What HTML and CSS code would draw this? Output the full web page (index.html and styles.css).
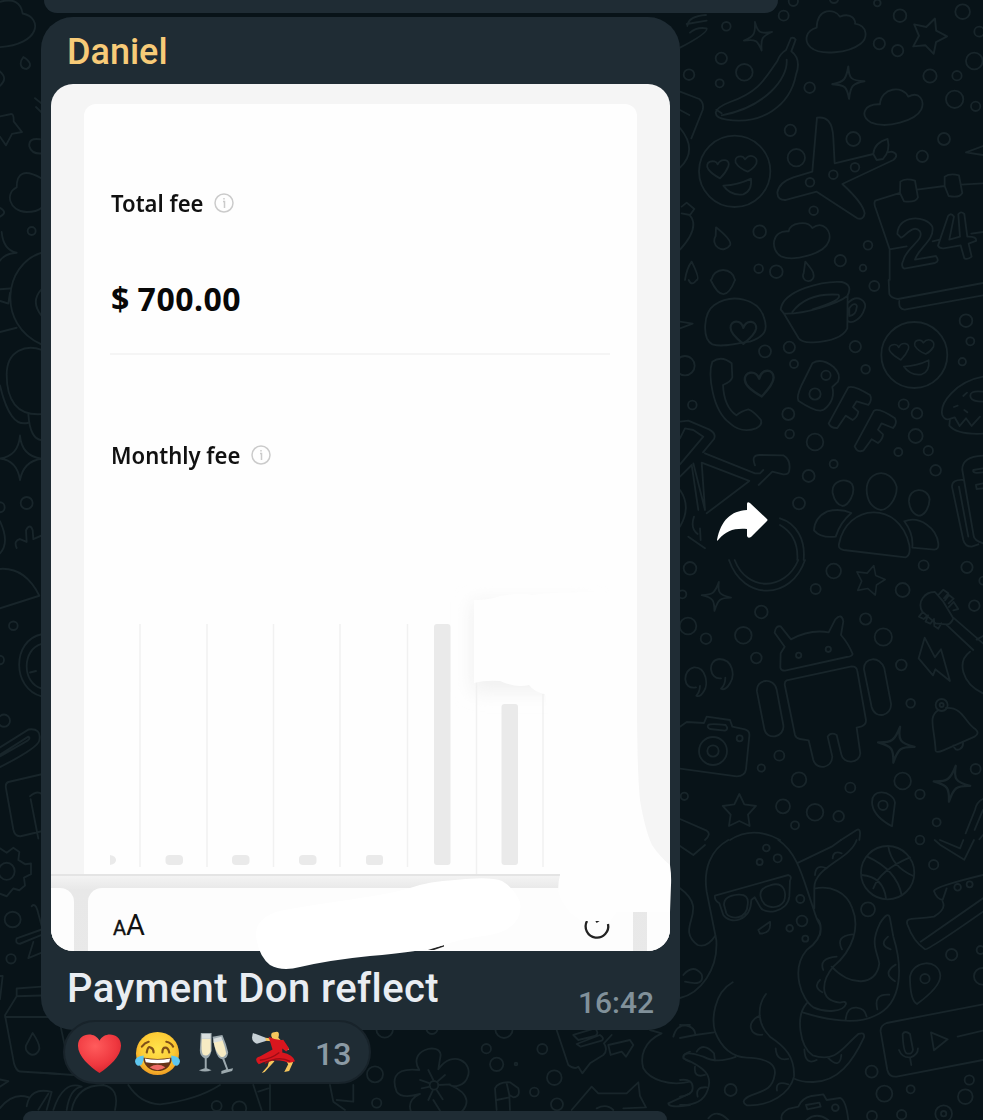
FILE: index.html
```html
<!DOCTYPE html>
<html lang="en">
<head>
<meta charset="utf-8">
<title>Chat</title>
<link rel="stylesheet" href="styles.css">
</head>
<body>
<main class="chat">
<svg class="wallpaper" viewBox="0 0 983 1120" aria-hidden="true">
<defs>
<path id="spark" d="M0-44C1-12 8-5 44-4C12 2 6 8 2 44C-4 12-8 6-44 4C-12-2-6-8 0-44Z"/>
<path id="star" d="M0-50L15-19 50-14 26 12 31 46 0 31-31 46-26 12-50-14-15-19Z"/>
<path id="heart" d="M0 28Q-32 4-32-12C-32-32-6-34 0-12C8-34 34-30 32-10Q30 4 0 28Z"/>
<path id="love" d="M-80-5C-95-28-60-38-52-20C-42-40-12-35-20-14Q-28 6-45 22Q-68 10-80-5ZM2-25C-4-45 22-50 30-35C46-55 70-42 64-22Q55-6 38 2Q12-8 2-25ZM-35 44Q10 42 48 23Q52 60 25 70Q-12 76-35 44Z"/>
</defs>
<g transform="translate(680 0) scale(.3333)">
<g><circle cx="311" cy="47" r="15"/><circle cx="139" cy="79" r="13"/><circle cx="124" cy="175" r="17"/><circle cx="27" cy="224" r="16"/><circle cx="119" cy="250" r="12"/><circle cx="193" cy="217" r="25"/><circle cx="389" cy="263" r="16"/><circle cx="340" cy="4" r="14"/><circle cx="462" cy="-4" r="13"/><circle cx="592" cy="9" r="10"/><circle cx="660" cy="47" r="19"/><circle cx="848" cy="35" r="22"/><circle cx="898" cy="95" r="15"/><circle cx="598" cy="131" r="17"/><circle cx="653" cy="152" r="17"/><circle cx="883" cy="183" r="25"/><circle cx="750" cy="228" r="20"/><circle cx="831" cy="227" r="14"/><circle cx="824" cy="298" r="26"/><circle cx="887" cy="319" r="14"/><circle cx="792" cy="417" r="18"/><circle cx="727" cy="469" r="17"/><circle cx="520" cy="417" r="21"/><circle cx="331" cy="391" r="17"/><circle cx="349" cy="473" r="26"/><circle cx="525" cy="502" r="13"/><circle cx="460" cy="524" r="13"/><circle cx="390" cy="547" r="13"/><circle cx="401" cy="632" r="13"/><circle cx="239" cy="695" r="19"/><circle cx="564" cy="736" r="13"/><circle cx="481" cy="782" r="17"/><circle cx="549" cy="804" r="10"/><circle cx="289" cy="815" r="19"/><circle cx="236" cy="806" r="13"/><circle cx="164" cy="514" r="107"/></g>
<use href="#spark" transform="translate(234 109) rotate(-12)"/><use href="#spark" transform="translate(505 248) scale(1.1)"/><use href="#star" transform="translate(747 105) rotate(20) scale(1.05)"/>
<path d="M410 83C412 22 465 25 480 50C518 35 528 65 525 71C565 78 563 115 542 131C505 160 420 167 392 142C370 122 378 92 410 83ZM600 313C602 262 670 255 685 290C718 272 735 302 724 328C707 362 620 388 572 367C538 345 553 311 600 313ZM326 694C330 668 382 660 397 684C430 660 456 695 447 722C433 764 340 785 303 769C270 750 274 690 326 694Z"/>
<path d="M318 150L333 114Q342 111 347 119L334 154Q365 178 348 224C330 320 242 375 140 359Q108 355 107 338Q111 321 150 306C235 276 253 240 292 183Q300 161 318 150ZM320 179C325 235 255 322 125 346M109 329L125 340"/>
<path d="M397 515L411 353C440 349 458 365 460 414L464 490 580 462Q582 429 623 417Q632 453 609 477L590 480 580 462M623 457L635 455Q660 463 640 480L487 552Q550 610 554 640Q551 661 532 655L410 575 318 600Q293 602 292 578Q296 547 340 532L397 515"/>
<use href="#love" transform="translate(165 513)"/>
<path d="M586 602L660 579 661 545Q675 533 705 542L714 592Q706 609 672 604L660 579M711 569L794 558 794 530Q810 519 837 526L847 579Q838 595 806 588L794 558M843 554L909 550M586 602Q580 610 588 628L629 748 629 840M629 748L680 739M758 724L779 719M874 701L909 696M652 702C655 642 738 646 757 680C766 719 714 746 705 779L768 768Q780 784 765 789L673 806Q661 800 670 781C680 740 734 721 720 694C700 670 675 710 663 713ZM822 650Q812 636 804 649L774 737Q778 746 791 745L842 736 853 775Q864 780 875 770L866 731 888 723Q892 709 862 710L853 642Q842 632 835 643L840 710 808 719Z"/>
<path d="M108 682Q158 722 150 736A24 24 0 1 1 107 708ZM376 785Q402 815 400 822A16 16 0 1 1 371 820ZM35 785Q60 835 51 840M15 840Q20 805 35 785M94 840A36 36 0 0 1 165 840M0 275L58 297Q73 309 68 330L34 415M0 384Q55 450 0 503M22 78Q25 48 78 45M20 72L80 62M30 98Q50 80 80 85Q86 98 0 143M5 620L20 608 43 627 30 645 5 640M28 645Q62 680 0 749M909 438L858 457 909 465M0 330L28 345"/>
</g>
<g transform="translate(680 280) scale(.3333)">
<circle cx="583" cy="18" r="15"/><circle cx="255" cy="214" r="18"/><circle cx="328" cy="202" r="17"/><circle cx="342" cy="252" r="12"/><circle cx="526" cy="200" r="17"/><circle cx="557" cy="268" r="13"/><circle cx="858" cy="122" r="19"/><circle cx="871" cy="184" r="12"/><circle cx="847" cy="245" r="11"/><circle cx="325" cy="402" r="18"/><circle cx="329" cy="462" r="13"/><circle cx="405" cy="486" r="25"/><circle cx="461" cy="552" r="12"/><circle cx="386" cy="588" r="18"/><circle cx="357" cy="670" r="18"/><circle cx="671" cy="373" r="15"/><circle cx="711" cy="400" r="16"/><circle cx="707" cy="468" r="21"/><circle cx="655" cy="516" r="12"/><circle cx="745" cy="512" r="14"/><circle cx="767" cy="571" r="16"/><circle cx="37" cy="375" r="13"/><circle cx="15" cy="257" r="29"/><circle cx="703" cy="225" r="99"/><circle cx="438" cy="286" r="14"/><circle cx="405" cy="342" r="17"/>
<use href="#love" transform="translate(703 220) scale(.9)"/><use href="#heart" transform="translate(190 158) scale(1.2)"/><use href="#heart" transform="translate(240 312) rotate(-8) scale(1.35)"/>
<path d="M92 0Q132 85 165 0M26 0Q35 20 50 0M97 193C65 175 70 98 103 75C155 39 235 55 252 113C265 150 255 169 210 185C165 190 130 203 97 193ZM0 125L38 131 0 145"/>
<path d="M302 88C310 30 430 2 486 6Q520 15 502 48C475 70 375 103 312 101ZM312 101L356 175Q366 189 400 187C455 184 490 170 502 145L503 46M337 96Q380 38 475 44Q490 61 398 88M503 70C533 38 565 65 553 88C545 117 515 133 504 123M508 104V85C520 65 534 72 530 83Q528 106 508 108M626 0L628 42Q632 54 654 57L909 9M658 63Q655 88 674 89L909 46"/>
<path d="M155 250Q125 225 97 245C84 280 95 390 150 430Q185 461 228 445Q248 436 243 420Q222 394 205 388Q182 394 169 406Q132 380 129 315Q153 306 157 292Z"/>
<path d="M397 250Q425 232 461 261Q484 283 474 305L457 321Q467 360 433 388Q415 402 355 362Q349 350 365 315ZM505 322Q520 314 570 345Q578 359 565 375L530 364 519 381 535 395Q533 411 518 420L497 407 472 444Q452 445 446 430ZM582 392Q597 382 645 415Q653 430 639 444L605 430 594 449 609 463Q609 478 594 489L575 478 551 511Q532 520 524 499Z"/>
<path d="M75 520L225 580 240 580 250 570M225 556Q212 524 240 525L310 526Q333 540 328 570Q328 584 310 583L277 575 236 615M0 425L25 422 87 448Q110 460 102 477L69 517M0 475L15 445 40 450 70 470 0 553M40 550L75 690M65 548L208 603 80 700M65 548L75 690M0 590L35 555 55 690M42 710Q30 745 53 762M25 770L75 805M60 745L62 780M300 715C350 730 377 780 371 840M300 735C335 755 355 790 352 840M0 630Q35 680 0 740"/>
<path d="M458 640C453 600 500 592 516 612C530 640 503 678 487 678Q466 673 458 640ZM560 630C560 570 632 560 650 620C652 655 625 690 602 690Q562 680 560 630ZM687 665C685 620 744 620 749 658C747 690 730 708 715 707Q690 698 687 665ZM402 751Q404 712 442 694Q482 684 514 699Q480 728 467 770Q422 775 402 751ZM477 792C500 670 658 660 688 795Q693 826 677 832L491 810Q474 807 477 792ZM673 724C720 706 770 745 775 790Q777 809 763 809L697 803Q701 760 673 724Z"/>
<path d="M909 290C827 305 778 370 787 405Q794 422 810 417L808 437Q832 465 909 461M810 417L824 412 839 438 858 415 875 438 900 410M909 335Q865 330 872 352Q877 365 909 365M850 348L861 338M822 381L833 377M853 390L862 397M909 527Q845 530 847 570L881 767Q882 781 909 790M850 600Q816 598 816 620L850 780Q855 800 875 800L895 793M837 620L865 770M909 565L880 570Q876 582 909 577M909 610L888 615 890 627 909 625"/>
</g>
<g transform="translate(680 560) scale(.3333)">
<circle cx="30" cy="25" r="19"/><circle cx="7" cy="103" r="12"/><circle cx="24" cy="198" r="25"/><circle cx="78" cy="236" r="16"/><circle cx="244" cy="156" r="19"/><circle cx="190" cy="226" r="25"/><circle cx="229" cy="294" r="16"/><circle cx="461" cy="33" r="22"/><circle cx="407" cy="87" r="15"/><circle cx="557" cy="177" r="17"/><circle cx="610" cy="231" r="26"/><circle cx="668" cy="90" r="21"/><circle cx="731" cy="16" r="15"/><circle cx="861" cy="22" r="17"/><circle cx="910" cy="62" r="12"/><circle cx="883" cy="137" r="16"/><circle cx="664" cy="315" r="16"/><circle cx="692" cy="430" r="13"/><circle cx="356" cy="286" r="8"/><circle cx="445" cy="268" r="8"/><circle cx="298" cy="587" r="15"/><circle cx="244" cy="624" r="11"/><circle cx="357" cy="659" r="22"/><circle cx="309" cy="739" r="21"/><circle cx="345" cy="796" r="12"/><circle cx="405" cy="757" r="25"/><circle cx="476" cy="769" r="16"/><circle cx="511" cy="683" r="15"/><circle cx="668" cy="663" r="25"/><circle cx="720" cy="703" r="14"/><circle cx="887" cy="627" r="15"/><circle cx="770" cy="787" r="12"/><circle cx="609" cy="736" r="14"/><circle cx="99" cy="573" r="42"/><circle cx="99" cy="573" r="17"/><circle cx="13" cy="709" r="11"/><circle cx="179" cy="535" r="9"/><circle cx="785" cy="435" r="18"/><circle cx="785" cy="435" r="6"/>
<use href="#spark" transform="translate(109 109) rotate(10)"/><use href="#spark" transform="translate(649 554) rotate(12) scale(1.25)"/><use href="#spark" transform="translate(816 671) rotate(12) scale(1.25)"/><use href="#star" transform="translate(570 59) rotate(15) scale(.88)"/><use href="#star" transform="translate(178 752)"/>
<path d="M147 0C190 125 335 120 375 0M164 0C200 95 315 95 355 0"/>
<path d="M301 322L302 280 314 260 284 218Q287 196 302 199L333 238Q390 207 446 217L466 178Q485 158 490 184L483 225Q505 250 518 282Q515 290 500 291L315 332Q302 332 301 322ZM320 361L515 319Q530 319 532 333L558 480Q559 493 545 499L530 503 541 580C540 610 490 615 484 583L470 525Q452 515 443 530L457 590C455 626 410 632 400 600L386 541 360 537Q348 535 345 525L315 378Q312 365 320 361ZM231 395C226 357 283 350 290 389L310 495C315 533 260 543 253 507ZM552 328C550 292 600 285 613 325L633 430C637 468 585 480 575 441Z"/>
<path d="M48 382C8 392 5 330 42 322C80 320 85 376 72 393Q60 413 49 407Q59 397 60 378M123 355C88 360 80 300 118 297C160 298 165 348 150 370Q137 393 123 386Q136 374 136 353M0 500L20 486 72 489 80 470 150 480 157 500 195 508Q210 512 208 528L198 628Q195 648 170 649L0 626M85 495Q90 490 137 495Q147 508 135 512L90 507Q80 502 85 495"/>
<path d="M734 233L765 292 783 268 810 363 766 328 759 346 716 295ZM798 193Q812 195 820 175L790 125 765 96C735 95 710 125 727 155L767 190ZM798 193L880 270M820 173L909 250M870 275C830 305 845 370 909 400M890 239L909 228M776 104L790 89 805 100 792 115M795 121L807 105 821 116 806 130M807 141L821 126 835 147 820 151M728 156L717 170 731 177 744 166M744 167L737 185 751 191 762 177M762 178L763 198 775 206 784 190M776 450C743 470 763 500 767 572Q769 580 790 571L884 530Q900 520 887 508C855 490 850 440 798 444M820 556Q825 575 840 567Q851 560 849 547M577 735C568 680 640 692 645 728L636 799Q583 770 577 735ZM150 840Q220 796 300 840M0 777L80 812Q95 822 75 840M483 840L530 810Q545 802 538 840M909 717Q890 725 885 750L857 820M909 750L884 810M898 838L909 825"/>
</g>
<g transform="translate(680 840) scale(.3333)">
<circle cx="259" cy="24" r="10"/><circle cx="239" cy="66" r="9"/><circle cx="293" cy="55" r="12"/><circle cx="361" cy="177" r="12"/><circle cx="366" cy="243" r="16"/><circle cx="329" cy="265" r="10"/><circle cx="376" cy="296" r="9"/><circle cx="623" cy="98" r="80"/><circle cx="564" cy="208" r="21"/><circle cx="761" cy="74" r="14"/><circle cx="815" cy="344" r="17"/><circle cx="902" cy="330" r="12"/><circle cx="907" cy="409" r="25"/><circle cx="735" cy="416" r="14"/><circle cx="575" cy="695" r="18"/><circle cx="613" cy="761" r="24"/><circle cx="692" cy="748" r="12"/><circle cx="868" cy="720" r="14"/><circle cx="856" cy="770" r="22"/><circle cx="576" cy="828" r="15"/><circle cx="665" cy="824" r="14"/><circle cx="791" cy="821" r="25"/><circle cx="791" cy="821" r="8"/><circle cx="152" cy="750" r="18"/><circle cx="466" cy="803" r="10"/><circle cx="833" cy="142" r="10"/><circle cx="869" cy="133" r="9"/><circle cx="720" cy="0" r="13"/>
<path d="M145 0C90 30 70 90 80 155L109 300C115 390 60 460 0 474M295 0C355 40 370 120 400 205Q410 240 420 255Q430 295 380 330C330 390 365 480 400 502C440 520 490 515 498 492Q499 482 480 488C410 480 430 415 460 380C520 330 540 260 517 205C500 155 450 135 403 146M355 68L455 20 483 0M530 0C510 60 400 80 403 146L403 205M105 167L325 105Q337 109 330 122L328 170C322 220 250 225 240 200L224 172 214 180C212 245 150 255 130 225L118 190Q102 180 105 167ZM132 194Q132 167 175 164Q208 162 203 194C201 240 150 240 139 220ZM242 170Q237 145 270 136C315 122 320 160 312 184C295 210 250 208 242 170ZM235 270L270 245Q275 281 240 281ZM158 427C100 460 95 540 105 575Q135 650 200 653C265 655 290 675 284 705C277 754 240 753 205 770Q180 785 200 796C270 800 330 760 342 710C345 650 315 620 270 590C225 545 236 490 258 462M380 490C345 530 360 620 398 646C470 670 490 620 535 582Q555 575 552 592C518 665 475 725 400 726Q365 727 345 717M370 518C440 540 530 555 583 528C675 490 665 370 640 290L630 235Q625 210 600 250C570 310 590 330 598 370C590 440 510 440 455 380M405 105Q407 70 440 85M458 55Q460 30 485 40M486 328Q465 288 517 283M430 390Q415 355 470 350M410 235Q428 250 420 285M420 420Q398 440 427 457M497 540Q500 500 530 503Q555 505 560 530M592 508Q580 460 628 464M645 424Q605 400 647 374M632 328Q595 315 624 290M240 527C195 545 210 590 247 584M287 625Q290 665 325 657M291 752Q285 720 325 733M373 628Q375 678 410 660M443 652Q480 690 484 645"/>
<path d="M0 145C95 215-20 260 53 315Q80 325 106 287M10 405Q40 370 65 403Q75 440 15 425M0 555Q45 555 46 585L0 594M46 585L102 577M167 651Q110 672 70 650C20 633 10 640 10 655C70 680 100 705 83 750C70 790 30 796 0 795M50 635Q70 605 102 640L105 662M45 680Q40 715 75 705M53 770Q45 740 80 742M0 720Q40 715 38 745Q38 765 0 770M85 835Q110 805 145 840M305 840Q300 820 325 807L355 800Q365 775 395 768L430 763 440 780 480 774Q498 780 505 840M378 795L418 788 422 800 382 808ZM380 840Q410 815 445 840"/>
<path d="M562 50Q650 90 665 165M545 105Q610 110 618 175M580 145Q600 90 690 52M625 20Q635 80 700 108M764 0L780 14 853 59 882 0M780 0L840 25 850 0M762 153Q765 140 909 105M762 153Q770 177 788 180L800 145M788 185Q800 208 762 230C700 240 675 230 682 253Q700 305 735 328Q745 330 909 215M722 305L909 175M711 492Q690 480 690 410C700 360 775 355 781 405Q783 440 711 492ZM909 493L620 549Q600 557 602 575L622 690Q627 712 650 710L909 660M668 582Q675 570 690 582L699 629Q697 645 680 640Q670 635 668 582ZM657 630Q667 655 692 652Q714 645 714 625M690 652L694 675M753 577L803 598 762 631ZM833 590L909 572M0 18L40 45 75 15"/>
</g>
<g transform="scale(.3333 .357)">
<path d="M0 5Q60-10 68 38C130 50 120 125 0 132M70 160C90 170 98 185 80 193C60 192 57 175 70 160ZM0 200Q25 220 0 240M0 326L30 320Q42 315 41 340L66 370 36 375 18 407 0 383M120 390Q85 385 88 410Q95 432 125 430M125 500Q50 460 50 525C15 540 25 590 80 594Q110 594 125 582M0 582Q25 595 0 607M5 650Q10 700 50 708Q15 710 0 730M125 708C10 740-10 910 125 965M125 810Q90 845 125 885M0 810L30 808M0 843L25 850 30 820M0 930L50 918M125 980C80 965 20 980 20 1050C20 1120 50 1165 125 1160M0 1080Q30 1200 85 1184M85 1160Q90 1230 125 1233M60 1220Q65 1277 125 1285Q70 1292 60 1345Q52 1290 0 1284Q55 1278 60 1220M0 1460Q30 1520 0 1550M50 1535Q40 1515 60 1510L80 1518 78 1485Q90 1465 98 1485L100 1510 125 1500M105 275L125 290M108 300L125 315"/>
<ellipse cx="95" cy="647" rx="12" ry="11"/><ellipse cx="80" cy="1409" rx="18" ry="17"/><circle cx="0" cy="1421" r="14"/>
</g>
<g transform="translate(0 560) scale(.3333 .357)">
<path d="M0 25Q75 20 118 100L0 135M125 208C35 225 35 360 125 382M125 235C65 250 65 345 125 360M90 315L108 311M0 525L85 475Q125 470 118 505Q115 525 0 580M0 550L75 510Q95 500 85 495L0 545M125 600L25 622Q15 625 18 640L40 755Q45 777 65 773L125 760M90 662Q110 645 125 655M92 670L115 780M0 808L20 820 40 806 58 818 55 840 75 852 93 850V880L72 890 75 912 58 925 40 920 20 942 0 935M0 1165L8 1165 0 1230M125 1195L50 1200V1222L125 1220M50 1222L15 1275 42 1410Q48 1430 60 1433L180 1440M15 1280H180M98 1325Q120 1355 118 1370A20 20 0 1 1 78 1360ZM95 970Q105 960 112 980L125 1025M125 1050L60 1075Q45 1075 50 1060L125 1035M85 1115L100 1070M85 1115L125 1100M0 1455L25 1460 0 1475M0 1535Q40 1490 85 1505M80 1530Q90 1475 155 1490L140 1540M115 1540L145 1495"/>
<ellipse cx="40" cy="184" rx="13" ry="12"/><ellipse cx="12" cy="450" rx="18" ry="17"/><ellipse cx="20" cy="872" rx="24" ry="24"/><ellipse cx="38" cy="1007" rx="24" ry="22"/><ellipse cx="33" cy="1117" rx="14" ry="13"/><circle cx="0" cy="280" r="12"/>
</g>
<g transform="translate(40 1020) scale(.3333)"><path d="M0 158L100 165M62 20L75 80M40 270Q70 180 125 200Q90 205 80 270M95 270Q110 195 190 195Q240 205 225 270M265 195Q300 250 360 253Q470 240 540 195M640 195L665 270M690 195V270M655 215L685 205M870 195L880 245 915 270M940 195L940 245 890 240"/><circle cx="530" cy="258" r="15"/><circle cx="598" cy="265" r="21"/></g>
<g transform="translate(350 1020) scale(.3333)">
<path d="M208 150C170 90 270 65 272 105L265 148C310 85 370 130 353 170C345 198 310 203 300 195C370 225 350 260 335 275M208 150C120 140 130 190 140 215Q155 238 210 222Q170 240 183 275M235 150L250 180M210 180L240 190M215 205L240 200M235 240L248 212M260 210L278 238M265 195L300 193M262 185L285 165M250 240L272 275M440 270L435 205Q445 185 480 187L505 205Q512 230 490 232L478 225 480 270M470 190L478 225M440 240L478 232M620 30L655 135Q675 150 685 140L697 160 720 130 760 105Q775 90 762 70L785 45M670 45L735 25Q750 40 735 48L685 60ZM680 72L750 45Q765 55 755 62L692 80ZM775 75L840 60 850 75 828 110 815 95 782 105ZM665 270L725 200 745 220 830 220 865 187 870 228 888 262 820 265M740 265Q770 250 790 270M900 30L935 40C880 65 870 110 880 145C900 180 960 200 1020 185M970 50Q980 10 1020 15M1020 95Q980 110 1020 125M1020 220L955 250Q955 265 1020 255"/>
<circle cx="104" cy="28" r="25"/><circle cx="246" cy="25" r="17"/><circle cx="462" cy="28" r="26"/><circle cx="75" cy="163" r="24"/><circle cx="80" cy="249" r="14"/><circle cx="409" cy="86" r="14"/><circle cx="440" cy="133" r="20"/><circle cx="498" cy="132" r="4"/><circle cx="577" cy="87" r="15"/><circle cx="613" cy="173" r="22"/><circle cx="553" cy="216" r="13"/><circle cx="621" cy="253" r="18"/><circle cx="252" cy="196" r="13"/>
</g>
</svg>

<div class="bubble-edge bubble-edge-top"></div>

<article class="message">
  <section class="bubble">
    <h1 class="sender">Daniel</h1>
    <figure class="media">
      <div class="shot">
        <div class="card">
          <div class="row row-total"><span class="label label-total">Total fee</span>
            <svg class="info" viewBox="0 0 20 20"><circle cx="10" cy="10" r="9"/><path d="M9 8.500h1.500V15M10 5v1.500"/></svg></div>
          <div class="amount">$ 700.00</div>
          <div class="divider"></div>
          <div class="row row-monthly"><span class="label label-monthly">Monthly fee</span>
            <svg class="info" viewBox="0 0 20 20"><circle cx="10" cy="10" r="9"/><path d="M9 8.500h1.500V15M10 5v1.500"/></svg></div>
          <svg class="chart" viewBox="84 585 553 289">
            <defs><filter id="soft" x="-30%" y="-30%" width="160%" height="160%"><feGaussianBlur stdDeviation="9"/></filter></defs>
            <g class="grid"><path d="M140 624V867M207 624V867M273.500 624V867M340 624V867M407.500 624V867M476.500 680V874M543 694V867"/></g>
            <rect x="472" y="602" width="120" height="90" fill="#f1f1f1" filter="url(#soft)"/>
            <g class="bars"><path d="M110 855Q116 856 116 860Q116 864 110 865Z"/><rect x="165.500" y="855" width="17.500" height="10" rx="4"/><rect x="232" y="855" width="17.500" height="10" rx="4"/><rect x="299" y="855" width="17.500" height="10" rx="4"/><rect x="366" y="855" width="17" height="10" rx="3"/><rect x="434" y="624" width="16.500" height="241" rx="3"/><rect x="501.500" y="704" width="16.500" height="161" rx="3"/></g>
          </svg>
        </div>
        <div class="browser">
          <div class="tab tab-left"></div>
          <div class="tab tab-main"><span class="aa-small">A</span><span class="aa-big">A</span></div>
          <div class="tab tab-right"></div>
        </div>
      </div>
      <svg class="marks" viewBox="51 84 619 867" aria-hidden="true">
        <path d="M587 921A11.300 11.300 0 1 0 608 924M596 922L599 920" fill="none" stroke="#222" stroke-width="2.300"/>
        <path d="M474 600Q490 600 500 596Q520 592 532 595Q550 592 600 592L637 600V700Q637 770 640 800Q645 830 652 845Q660 857 670 865Q671.500 875 671 885L670 912H617L610 921H582Q570 915 561 900Q556 890 560 875V800L545 694Q534 692 529 685Q515 688 500 681Q485 680 474 683Z" fill="#fefefe"/>
        <path d="M428 950L444 945V946.500L434 950Z" fill="#222"/>
        <path d="M257 942C253 925 262 913 290 909C340 900 380 897 410 888Q430 881 455 880Q490 876 502 881Q514 888 520 902Q524 928 490 935Q460 939 444 945Q420 952 370 956Q330 960 300 967Q282 972 270 965Q260 957 257 942Z" fill="#fff"/>
      </svg>
    </figure>
    <footer class="caption-row"><p class="caption">Payment Don reflect</p><time class="time">16:42</time></footer>
    <div class="reactions">
      <svg class="emoji" viewBox="0 0 46 46"><defs><radialGradient id="red" cx=".4" cy=".3" r=".75"><stop stop-color="#ff5c5c"/><stop offset=".65" stop-color="#ef383f"/><stop offset="1" stop-color="#d4242e"/></radialGradient></defs><path d="M23 43C13 36 1 26 1 15C1 2 18 0 23 10C28 0 45 2 45 15C45 26 33 36 23 43Z" fill="url(#red)"/></svg>
      <svg class="emoji" viewBox="0 0 46 46"><defs><radialGradient id="gold" cx=".5" cy=".4" r=".6"><stop stop-color="#ffe34c"/><stop offset=".65" stop-color="#fccb35"/><stop offset="1" stop-color="#ef9d23"/></radialGradient></defs><circle cx="23" cy="23" r="22" fill="url(#gold)"/><path d="M12 22Q13 15 16 17Q19 18 19 22M28 22Q28 17 31 17Q34 17 35 22M7 16Q10 12 14 11M32 11Q37 12 39 16" fill="none" stroke="#805019" stroke-width="2.200" stroke-linecap="round"/><path d="M8 27Q23 30 38 27Q36 41 23 41Q10 40 8 27Z" fill="#653417"/><path d="M10 28Q23 31 36 28L35 32Q23 34 11 32Z" fill="#fff"/><path d="M15 37Q23 32 31 37Q23 43 15 37Z" fill="#ef6c67"/><path d="M9 25Q0 26 0 31Q1 37 6 35Q9 32 9 25ZM37 25Q46 26 46 31Q45 37 40 35Q37 32 37 25Z" fill="#5fc7ef"/></svg>
      <svg class="emoji" viewBox="0 0 46 46"><path d="M8 2L19 2 19 20Q17 28 14 28L14 38 19 40Q12 43 6 40L12 38 12 28Q7 26 7 20Z" fill="#9ca9ae"/><path d="M9 8H18V21Q15 27 10 24Q8 20 9 8Z" fill="#f6ebc3"/><path d="M20 6L30 4Q34 13 36 22Q35 28 32 28L36 39 41 38 40 41 29 44 29 41 34 39 30 29Q25 28 23 20Z" fill="#9ca9ae"/><path d="M21 11L30 9Q33 17 34 23Q32 28 28 26Q23 22 21 11Z" fill="#f6ebc3"/><path d="M9 3H18V8H9ZM21 8L29 6 30 10 21 12Z" fill="#d9dfdf"/></svg>
      <svg class="emoji" viewBox="0 0 46 46"><path d="M2 2Q-1 11 6 13L16 10 15 7Z" fill="#c6d0d5"/><path d="M25 1Q30 0 28 7L34 13 39 19 36 20 26 11 15 10 15 7 22 8Q18 1 25 1ZM19 29L17 36 11 43 14 42 24 31ZM35 29L38 34 34 42 39 41 43 32 39 26Z" fill="#f5c65d"/><path d="M18 6Q26 10 33 9L39 18 36 21 32 18 32 22Q43 24 45 31Q39 34 34 31Q20 28 8 34Q2 28 9 26L22 19Z" fill="#d9161e"/><path d="M9 30Q20 29 29 22M14 33Q28 25 40 31" fill="none" stroke="#9c0d16" stroke-width="1.500"/></svg>
      <span class="count">13</span>
    </div>
  </section>
  <button class="forward" aria-label="Forward"><svg viewBox="0 0 54 42"><path d="M1 39C5 19 15 10 31 9V3Q31 0 34 2L51 18Q52 19 51 20L35 36Q32 38 31 35V28C18 27 10 30 3 38Q1 41 1 39Z" fill="#fff"/></svg></button>
</article>

<div class="bubble-edge bubble-edge-bottom"></div>
</main>
</body>
</html>
```

FILE: styles.css
```css
* { box-sizing: border-box; }
body { margin: 0; background: #081318; font-family: Roboto, "Liberation Sans", sans-serif; }
.chat { position: relative; width: 983px; height: 1120px; overflow: hidden; background: #081318; display: flex; flex-direction: column; }
.wallpaper { position: absolute; inset: 0; width: 983px; height: 1120px; fill: none; stroke: #18252a; stroke-width: 5.5; stroke-linecap: round; stroke-linejoin: round; }
.bubble-edge { position: relative; background: #1f2c34; flex: none; }
.bubble-edge-top { width: 734px; height: 13px; margin-left: 44px; border-radius: 0 0 28px 28px; }
.bubble-edge-bottom { width: 644px; height: 9px; margin: 81px 0 0 23px; border-radius: 12px 12px 0 0; }
.message { position: relative; flex: none; display: flex; align-items: center; gap: 35px; margin: 4px 0 0 41px; height: 1013px; }
.bubble { position: relative; width: 639px; height: 1013px; padding: 0 10px; background: #1f2c34; border-radius: 32px; display: flex; flex-direction: column; }
.sender { margin: 0; height: 67px; padding: 0 16px; color: #f7cb78; font-size: 36px; font-weight: 500; line-height: 71px; }
.media { position: relative; margin: 0; width: 619px; height: 867px; flex: none; }
.shot { height: 867px; border-radius: 22px; overflow: hidden; background: #f5f5f5; display: flex; flex-direction: column; padding-top: 20px; }
.card { width: 553px; height: 770px; margin-left: 33px; flex: none; background: #fefefe; border-radius: 12px 12px 0 0; display: flex; flex-direction: column; }
.row, .amount, .divider { margin-left: 27px; flex: none; }
.row { display: flex; align-items: center; height: 40px; color: #111; }
.row-total { margin-top: 79px; }
.row-monthly { margin-top: 80px; }
.label { font: 600 24px/40px "Noto Sans", sans-serif; white-space: nowrap; transform-origin: 0 50%; }
.label-total { width: 103px; transform: scaleX(.92); }
.label-monthly { width: 140px; transform: scaleX(.92); }
.info { width: 20px; height: 20px; fill: none; stroke: #cbcbcb; stroke-width: 1.5; flex: none; }
.amount { margin-top: 56px; height: 40px; color: #080808; font: 700 32px/40px "Noto Sans", sans-serif; letter-spacing: .5px; word-spacing: -1px; white-space: nowrap; }
.divider { margin: 34px 0 0 26px; width: 500px; height: 2px; background: #f5f5f5; }
.chart { display: block; width: 553px; height: 289px; margin-top: 110px; }
.grid { fill: none; stroke: #f1f1f1; stroke-width: 1.5; }
.bars { fill: #eaeaea; }
.browser { flex: 1; display: flex; padding-top: 12px; border-top: 2px solid #e4e4e4; background: linear-gradient(#f3f3f3, #e8e8e8 14px, #e9e9e9); }
.tab { background: #fdfdfd; }
.tab-left { width: 23px; border-radius: 0 14px 0 0; }
.tab-main { width: 545px; margin-left: 14px; padding-left: 25px; border-radius: 14px 14px 0 0; color: #111; line-height: 74px; }
.tab-right { width: 23px; margin-left: 14px; }
.aa-small { font-size: 20px; -webkit-text-stroke: .4px #111; }
.aa-big { font-size: 29px; }
.marks { position: absolute; inset: 0; width: 619px; height: 867px; overflow: visible; }
.caption-row { display: flex; justify-content: space-between; height: 79px; padding: 0 16px; }
.caption { margin: 0; color: #e9edf2; font-size: 40px; font-weight: 500; line-height: 76px; letter-spacing: .42px; white-space: nowrap; }
.time { color: #81919a; font-size: 30px; font-weight: 500; line-height: 103px; }
.reactions { position: absolute; left: 22px; top: 1003px; width: 308px; height: 64px; padding: 3px 0 0 12px; border: 2px solid #18232a; border-radius: 32px; background: #1f2c34; display: flex; align-items: center; gap: 13px; }
.emoji { width: 45px; height: 45px; flex: none; }
.count { margin-left: 6px; color: #8b9aa4; font-size: 32px; font-weight: 500; }
.forward { width: 54px; height: 42px; margin: 0 0 4px 1px; padding: 0; border: 0; background: none; }
.forward svg { display: block; width: 54px; height: 42px; }
```
